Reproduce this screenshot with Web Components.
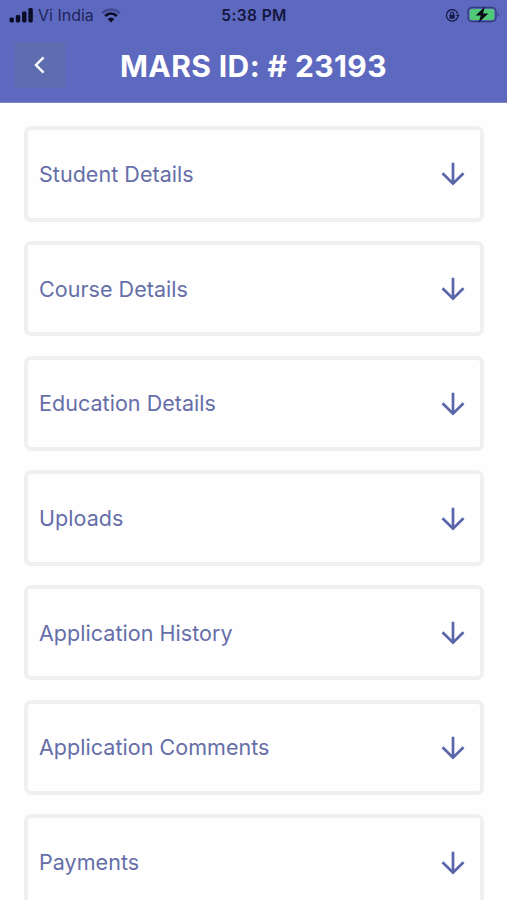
<!DOCTYPE html>
<html lang="en">
<head>
<meta charset="utf-8">
<title>MARS ID</title>
<style>
html,body{margin:0;height:900px;overflow:hidden;background:#fefefe;font-family:Inter,"Liberation Sans",sans-serif}
</style>
</head>
<body>
<mars-app></mars-app>
<script>
const define=(name,html)=>customElements.define(name,class extends HTMLElement{
  constructor(){super();this.attachShadow({mode:'open'}).innerHTML=html;}
});

define('status-bar',`<style>
:host{display:grid;grid-template-columns:1fr auto 1fr;align-items:center;height:30px;padding:0 8px 0 9px;box-sizing:border-box;color:#14163f}
.left,.right{display:flex;align-items:center}
.right{justify-content:flex-end;gap:7px}
.carrier{font-size:16px;line-height:20px;letter-spacing:0;margin:0 7px 0 5px;color:#20245c}
.time{font-size:15.5px;line-height:20px;font-weight:600;letter-spacing:.4px;padding-top:1px}
svg{display:block;flex:none}
</style>
<div class="left">
<svg width="24" height="16" viewBox="0 0 24 16" fill="#0b0c25"><rect x=".5" y="10.5" width="4.4" height="5" rx="1.4"/><rect x="6.8" y="8" width="4.4" height="7.5" rx="1.4"/><rect x="13.1" y="4.5" width="4.4" height="11" rx="1.4"/><rect x="19.4" y="1" width="4.4" height="14.5" rx="1.4"/></svg>
<span class="carrier">Vi India</span>
<svg width="20" height="15" viewBox="0 0 20 15" fill="none" stroke="#0b0c25"><path d="M1.3 5.2C6.3.3 13.7.3 18.7 5.2" stroke="#444b96" stroke-width="2.7"/><path d="M4.2 8.1c3.5-3.3 8.1-3.3 11.6 0" stroke-width="2.8"/><path d="M10 14.5 6.7 11.1c1.9-1.8 4.7-1.8 6.6 0z" fill="#0b0c25" stroke="none"/></svg>
</div>
<span class="time">5:38 PM</span>
<div class="right">
<svg width="15" height="15" viewBox="0 0 15 15" fill="none" stroke="#171a48" stroke-width="1.3"><path d="M12.7 9.3A5.8 5.8 0 1 1 12.8 5.8"/><path d="m10.8 6.8 4 0-1.8 2.6z" fill="#171a48" stroke="none"/><rect x="4.5" y="6.7" width="5.2" height="4" rx=".6" fill="#171a48" stroke="none"/><path d="M5.6 7V5.6a1.55 1.55 0 0 1 3.1 0V7" stroke-width="1.1"/></svg>
<svg width="32" height="18" viewBox="0 0 32 18"><rect x="1" y="1.5" width="28" height="14" rx="4" fill="#5b68bd" stroke="#343b7e" stroke-width="1.4"/><rect x="2.7" y="3.1" width="24.6" height="10.8" rx="2.5" fill="#51ca78"/><path d="M30.8 6q2 2.4 0 4.8z" fill="#343b7e"/><path d="m17.8.8-9.2 8.7h5.2L11.7 16.5l9.7-9h-5.3z" fill="#080b16"/></svg>
</div>`);

define('back-button',`<style>
:host{display:flex;align-items:center;justify-content:center;width:50px;height:46px;background:#5d6daf;border-radius:2px}
</style><svg width="16" height="20" viewBox="0 0 16 20" fill="none" stroke="#fff" stroke-width="2.4"><path d="M11.6 2.3 4 10l7.6 7.7"/></svg>`);

define('app-header',`<style>
:host{display:block;height:103px;box-sizing:border-box;background:#5d69be;border-bottom:1px solid #7c86c5}
.bar{display:grid;grid-template-columns:50px 1fr 50px;align-items:center;padding:12px 15px 0}
h1{margin:0;padding-top:2px;text-align:center;white-space:nowrap;font-size:30px;line-height:44px;font-weight:700;letter-spacing:.4px;color:#fff}
</style><status-bar></status-bar><div class="bar"><back-button></back-button><h1><slot></slot></h1></div>`);

define('detail-card',`<style>
:host{display:flex;align-items:center;justify-content:space-between;box-sizing:border-box;height:95.3px;flex:none;border:4px solid #f0f0f0;border-radius:7px;padding:0 15.5px 0 11px;background:#fefefe;color:#656ea9;font-size:21.5px;letter-spacing:.04px;line-height:30px}
svg{display:block;margin-top:1px}
</style><span><slot></slot></span>
<svg width="24" height="26" viewBox="0 0 24 26" fill="none" stroke="#5966a9" stroke-width="2.7"><path d="M12 1.8v20.7M1.5 12.2 12 22.6l10.5-10.4"/></svg>`);

define('mars-app',`<style>
:host{display:block;height:900px;overflow:hidden}
main{display:flex;flex-direction:column;gap:19.4px;padding:23.3px 23px 0 24px}
</style><app-header>MARS ID: # 23193</app-header><main>
<detail-card>Student Details</detail-card>
<detail-card>Course Details</detail-card>
<detail-card>Education Details</detail-card>
<detail-card>Uploads</detail-card>
<detail-card>Application History</detail-card>
<detail-card>Application Comments</detail-card>
<detail-card>Payments</detail-card>
</main>`);
</script>
</body>
</html>
